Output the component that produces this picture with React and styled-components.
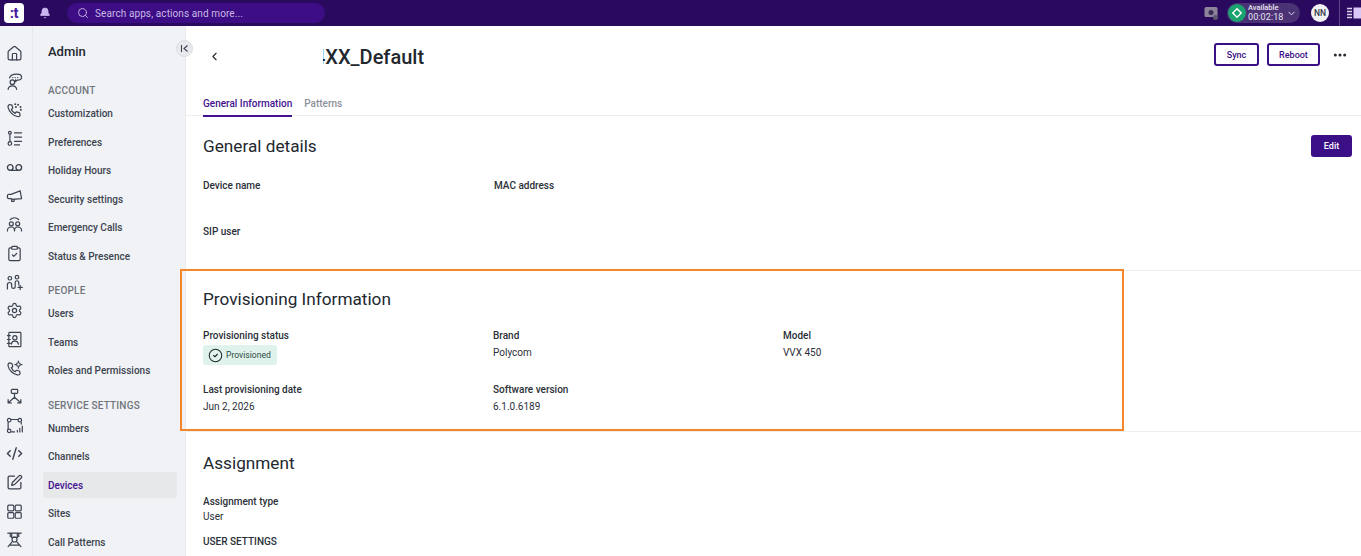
import React from "react";
import styled, { createGlobalStyle } from "styled-components";
import { Bell, Search, ChevronDown, ChevronLeft, MoreHorizontal, Home, Voicemail, ClipboardCheck, Settings, Code2, SquarePen, CircleCheck } from "lucide-react";

const Global = createGlobalStyle`
  html, body { margin: 0; padding: 0; height: 100%; overflow: hidden; background: #fff; }
  body { font-family: Roboto, "Liberation Sans", sans-serif; color: #23282f; }
  * { box-sizing: border-box; }
`;
const Page = styled.div`
  position: relative; width: 1361px; height: 556px; overflow: hidden;
  display: flex; flex-direction: column;
`;
const TopBar = styled.header`
  height: 26px; flex: none; background: #2a0a5e; display: flex; align-items: center; padding-left: 4px; color: #fff;
`;
const Logo = styled.div`
  width: 20px; height: 20px; border-radius: 4px; background: #fff; color: #4a1a9e; font-size: 15px; font-weight: 700;
  display: flex; align-items: center; justify-content: center; letter-spacing: -0.5px; line-height: 1;
`;
const BellWrap = styled.div`
  margin-left: 15px; width: 12px; display: flex; color: #c9b6ee;
`;
const SearchBox = styled.div`
  margin-left: 16px; width: 258px; height: 20px; border-radius: 10px; background: #3c0d85; color: #c9b8e6;
  display: flex; align-items: center; gap: 6px; padding-left: 10px; font-size: 10px; letter-spacing: 0.1px;
`;
const TopRight = styled.div`
  margin-left: auto; display: flex; align-items: center; height: 26px;
`;
const Monitor = styled.div`
  width: 15px; height: 15px; margin-right: 8px; display: flex; flex: none;
`;
const StatusPill = styled.div`
  width: 73px; flex: none; height: 20px; border-radius: 10px; background: #4a3275; display: flex; align-items: center; padding-left: 1px;
`;
const StatusDot = styled.div`
  width: 18px; height: 18px; flex: none; border-radius: 50%; background: #1aa36f; display: flex; align-items: center; justify-content: center;
`;
const StatusText = styled.div`
  margin-left: 2px; width: 33px; flex: none; display: flex; flex-direction: column; font-size: 7.5px; font-weight: 500; line-height: 8px; color: #e8e2f2;
  span:last-child { font-size: 9px; line-height: 10px; font-weight: 400; letter-spacing: 0.1px; }
`;
const Caret = styled.div`
  margin-left: 5px; display: flex; flex: none; color: #e8e2f2;
`;
const Avatar = styled.div`
  margin-left: 11px; width: 18px; height: 18px; flex: none; border-radius: 50%; background: #f2f2f4; color: #343a46; font-size: 8.5px; font-weight: 500;
  display: flex; align-items: center; justify-content: center;
`;
const TopSep = styled.div`
  width: 1px; height: 26px; flex: none; background: #5b4488; margin-left: 10px;
`;
const PanelIcon = styled.div`
  width: 14px; flex: none; margin-left: 7px; display: flex;
`;
const Body = styled.div`
  flex: 1; display: flex; min-height: 0;
`;
const Rail = styled.nav`
  width: 33px; flex: none; background: #f0f2f5; border-right: 1px solid #e6e8ec; padding: 18.5px 4px 0 0; display: flex; flex-direction: column; align-items: center; gap: 11.65px;
  color: #3c4350;
  svg { display: block; flex: none; width: 17px; height: 17px; }
`;
const Side = styled.aside`
  position: relative; width: 153px; flex: none; background: #f0f2f5; border-right: 1px solid #e9ebee; padding: 17px 8px 0 10px;
`;
const SideTitle = styled.div`
  font-size: 13px; font-weight: 500; line-height: 17px; padding-left: 5px; color: #23282f; margin-bottom: 25px;
`;
const Group = styled.div`
  font-size: 10px; font-weight: 500; color: #70757d; padding-left: 5px; line-height: 12px; letter-spacing: 0.2px; margin-top: ${p => p.$top || 0}px; margin-bottom: 3.5px;
`;
const Item = styled.div`
  height: 26px; margin-bottom: 2.55px; border-radius: 3px; padding-left: 5px; display: flex; align-items: center; font-size: 10px; font-weight: 500;
  color: ${p => (p.$on ? "#43128f" : "#3d4450")}; background: ${p => (p.$on ? "#e7e8ea" : "transparent")};
`;
const Collapse = styled.button`
  position: absolute; top: 14px; right: -8px; width: 17px; height: 17px; border-radius: 50%; border: 1px solid #dcdde0; background: #e8e9ec; padding: 0;
  display: flex; align-items: center; justify-content: center; color: #3c4350;
`;
const Main = styled.main`
  flex: 1; min-width: 0; display: flex; flex-direction: column;
`;
const Header = styled.div`
  height: 64px; flex: none; display: flex; align-items: flex-start; padding: 17px 9px 0 22px;
`;
const Back = styled.div`
  width: 13px; height: 14px; margin-top: 7px; display: flex; color: #23282f;
`;
const Title = styled.h1`
  position: relative; margin: 0 0 0 93px; white-space: nowrap;
  font-size: 20px; line-height: 28px; font-weight: 500; color: #23282f;
  &::before { content: ""; position: absolute; left: -1px; top: 0; width: 10px; height: 28px; background: #fff; }
`;
const Actions = styled.div`
  margin-left: auto; display: flex; align-items: center; gap: 8px;
`;
const Outline = styled.button`
  height: 23px; width: ${p => p.$w}px; border: 2px solid #3b0f85; border-radius: 3px; background: #fff; color: #3b0f85;
  font: 500 9px Roboto, sans-serif; padding: 0;
`;
const Dots = styled.div`
  margin-left: 4px; width: 20px; display: flex; color: #23282f;
`;
const Tabs = styled.div`
  height: 26px; flex: none; display: flex; gap: 12px; padding-left: 17px; border-bottom: 1px solid #eceef0;
`;
const Tab = styled.div`
  height: 27px; font-size: 10px; font-weight: 500; padding-top: 8px; line-height: 12px;
  color: ${p => (p.$on ? "#43128f" : "#8d9199")};
  border-bottom: ${p => (p.$on ? "2px solid #43128f" : "none")};
`;
const Section = styled.section`
  height: ${p => p.$h}px; flex: none; padding: ${p => p.$pt}px 9px 0 17px; border-bottom: ${p => (p.$last ? "none" : "1px solid #eceef0")};
`;
const SectionHead = styled.div`
  display: flex; align-items: center; justify-content: space-between; height: 22px; margin-bottom: ${p => p.$mb}px;
`;
const Heading = styled.h2`
  margin: 0; font-size: 17.2px; line-height: 22px; font-weight: 400; color: #23282f;
`;
const Edit = styled.button`
  width: 41px; height: 22px; border: 0; border-radius: 3px; background: #3b0f85; color: #fff; font: 500 9px Roboto, sans-serif; padding: 0;
`;
const Fields = styled.div`
  display: grid; grid-template-columns: repeat(3, 290px); row-gap: ${p => p.$gap}px;
`;
const Field = styled.div`
  display: flex; flex-direction: column; height: ${p => p.$h || 32}px; padding-left: ${p => p.$shift || 0}px;
`;
const Label = styled.div`
  font-size: 10px; font-weight: 500; line-height: 12px; color: #2b3038;
`;
const Value = styled.div`
  font-size: 10px; line-height: 12px; margin-top: ${p => p.$top || 5}px; color: #2b3038;
`;
const Badge = styled.div`
  margin-top: 3px; width: 74px; height: 20px; border-radius: 3px; background: #dff3ec; display: flex; align-items: center; gap: 3px; padding-left: 5px;
  font-size: 8.6px; color: #2f4a44;
`;
const Caps = styled.div`
  font-size: 10px; font-weight: 500; line-height: 12px; margin-top: 13px; color: #2b3038;
`;
const Highlight = styled.div`
  position: absolute; left: 180px; top: 269px; width: 944px; height: 162px; border: 2px solid #f5872a; pointer-events: none;
`;

const S = { fill: "none", stroke: "currentColor", strokeWidth: 1.7, strokeLinecap: "round", strokeLinejoin: "round", viewBox: "0 0 24 24" };
const railIcons = [
  <Home key="a" strokeWidth={1.7} />,
  <svg key="b" {...S}><circle cx="9" cy="13" r="3.200" /><path d="M3 23c.5-3.500 3-4.800 6-4.800s5.500 1.300 6 4.800" /><path d="M5 7c1-4 5-5.500 10-5.500 4 0 7 1 7 4 0 3.500-3.500 4.500-6 4.500l-2.500 2v-2.500" /><path d="M9.500 6.500h.01M13 6.500h.01M16.500 6.500h.01" strokeWidth="2" /></svg>,
  <svg key="c" {...S}><path d="M5 3.500l3.500 1 1 4.500-2 1.500c1 2.500 3 4.500 5.500 5.500l1.500-2 4.500 1 1 3.500c-.5 2-2 2.500-4 2C10 19.500 4.500 14 3 8c-.5-2 0-3.500 2-4.500z" /><path d="M13 3h.01M17 4h.01M20.500 7h.01M21 11h.01M14 7h.01" strokeWidth="2.800" /></svg>,
  <svg key="d" {...S}><circle cx="5.500" cy="4" r="2" /><circle cx="5.500" cy="19" r="2.500" /><path d="M5.500 6v10.500M12 4h10M12 10h10M12 16h10M12 21h7" /></svg>,
  <Voicemail key="e" strokeWidth={1.9} />,
  <svg key="f" {...S}><path d="M7 9l13-5 2 11-13 1-2-1H4a2 2 0 0 1-2-2v-2a2 2 0 0 1 2-2z" /><path d="M8 16v3h3l1-3" /></svg>,
  <svg key="g" {...S}><circle cx="7.500" cy="11" r="2.800" /><circle cx="16.500" cy="11" r="2.800" /><path d="M2 21c0-3.500 2.500-5.500 5.500-5.500S12 17 12 21c0-4 1.500-5.500 4.500-5.500S22 17.500 22 21M6 5c3.500-3 8.500-3 12 0" /></svg>,
  <ClipboardCheck key="h" strokeWidth={1.7} />,
  <svg key="i" {...S}><circle cx="5.500" cy="6" r="2.500" /><circle cx="15.500" cy="4.500" r="2.500" /><path d="M2 21v-6c0-2 1.500-3 3-3s3 1.500 3 3v3c0 3 5 3 5 0v-6c0-1.500 1-2.500 2.500-2.500s2.500 1 2.500 3v3M17 19h6M20 16v6" /></svg>,
  <Settings key="j" strokeWidth={1.7} />,
  <svg key="k" {...S}><rect x="4" y="2" width="17" height="20" rx="1" /><circle cx="12.500" cy="9.500" r="3" /><path d="M7.500 18.500c.5-3 2.500-4.200 5-4.200s4.500 1.200 5 4.200M2 6.500h4M2 12h4M2 17.500h4" /></svg>,
  <svg key="l" {...S}><path d="M5 4l3.500 1 1 4.500-2 1.500c1 2.500 3 4.500 5.500 5.500l1.500-2 4.500 1 1 3.500c-.5 2-2 2.500-4 2C10 20 4 14.500 3 8.500 2.500 6.500 3 5 5 4z" /><circle cx="17.500" cy="6.500" r="2.600" /><path d="M17.500 1.500v1.200M17.500 10.300v1.200M12.500 6.500h1.200M21.300 6.500h1.200" /></svg>,
  <svg key="m" {...S}><rect x="7.500" y="2" width="9" height="5.500" rx="1" /><path d="M12 7.500V13M12 13l-9 8M12 13l9 8M3 16.500V21h4.500M21 16.500V21h-4.500" /></svg>,
  <svg key="n" {...S}><circle cx="4.500" cy="4.500" r="2.500" /><circle cx="19.500" cy="4.500" r="2.500" /><circle cx="4.500" cy="19.500" r="2.500" /><path d="M7 3.500h10M21.500 7.500V10M3 7.500V17M8 21h4M16 21v-2M19.500 21v-5M23 21v-8" /></svg>,
  <Code2 key="o" strokeWidth={2} />,
  <SquarePen key="p" strokeWidth={1.8} />,
  <svg key="q" {...S}><rect x="2.500" y="3" width="8.500" height="8" rx="1.500" /><rect x="13" y="3" width="8.500" height="8" rx="1.500" /><rect x="2.500" y="13.500" width="8.500" height="8" rx="1.500" /><rect x="13" y="13.500" width="8.500" height="8" rx="1.500" /></svg>,
  <svg key="r" {...S}><path d="M2.500 3h19M6 3v5M18 3v5M8 3v6h8V3" /><circle cx="12" cy="12" r="3.500" /><path d="M9 15l-6 7M15 15l6 7M5 20h14" /></svg>,
];

const account = ["Customization", "Preferences", "Holiday Hours", "Security settings", "Emergency Calls", "Status & Presence"];
const people = ["Users", "Teams", "Roles and Permissions"];
const service = ["Numbers", "Channels", "Devices", "Sites", "Call Patterns"];

export default function App() {
  return (
    <Page>
      <Global />
      <TopBar>
        <Logo>:t</Logo>
        <BellWrap><Bell size={12} fill="currentColor" strokeWidth={1.5} /></BellWrap>
        <SearchBox><Search size={12} strokeWidth={1.8} />Search apps, actions and more...</SearchBox>
        <TopRight>
          <Monitor>
            <svg width="15" height="15" viewBox="0 0 15 15"><rect x="0.500" y="1" width="13" height="10" rx="1.500" fill="#8c8499" /><circle cx="7" cy="6.500" r="2.500" fill="#3a2a55" /><circle cx="11.500" cy="11.500" r="2.500" fill="#5e5670" /></svg>
          </Monitor>
          <StatusPill>
            <StatusDot>
              <svg width="10" height="10" viewBox="0 0 10 10"><path d="M5 .8L9.200 5 5 9.200.8 5z" fill="none" stroke="#fff" strokeWidth="1.400" /></svg>
            </StatusDot>
            <StatusText><span>Available</span><span>00:02:18</span></StatusText>
            <Caret><ChevronDown size={11} strokeWidth={2} /></Caret>
          </StatusPill>
          <Avatar>NN</Avatar>
          <TopSep />
          <PanelIcon>
            <svg width="14" height="12" viewBox="0 0 14 12"><path d="M0 1.500h5M0 4.500h5M0 7.500h5M0 10.500h5" stroke="#d9d0ea" strokeWidth="1.300" /><rect x="6.500" y="0.500" width="7.500" height="11" fill="#d9c8f5" /></svg>
          </PanelIcon>
        </TopRight>
      </TopBar>
      <Body>
        <Rail>{railIcons}</Rail>
        <Side>
          <SideTitle>Admin</SideTitle>
          <Group>ACCOUNT</Group>
          {account.map(t => <Item key={t}>{t}</Item>)}
          <Group $top={16}>PEOPLE</Group>
          {people.map(t => <Item key={t}>{t}</Item>)}
          <Group $top={16}>SERVICE SETTINGS</Group>
          {service.map(t => <Item key={t} $on={t === "Devices"}>{t}</Item>)}
          <Collapse aria-label="Collapse">
            <svg width="9" height="9" viewBox="0 0 9 9" fill="none" stroke="currentColor" strokeWidth="1.100"><path d="M1.500 1v7M7.500 1.500L4 4.500l3.500 3" /></svg>
          </Collapse>
        </Side>
        <Main>
          <Header>
            <Back><ChevronLeft size={13} strokeWidth={2} /></Back>
            <Title>4XX_Default</Title>
            <Actions>
              <Outline $w={45}>Sync</Outline>
              <Outline $w={53}>Reboot</Outline>
              <Dots><MoreHorizontal size={16} strokeWidth={2.500} /></Dots>
            </Actions>
          </Header>
          <Tabs>
            <Tab $on>General Information</Tab>
            <Tab>Patterns</Tab>
          </Tabs>
          <Section $h={155} $pt={19}>
            <SectionHead $mb={23}>
              <Heading>General details</Heading>
              <Edit>Edit</Edit>
            </SectionHead>
            <Fields $gap={14}>
              <Field><Label>Device name</Label></Field>
              <Field $shift={1}><Label>MAC address</Label></Field>
              <span />
              <Field><Label>SIP user</Label></Field>
            </Fields>
          </Section>
          <Section $h={161} $pt={17}>
            <SectionHead $mb={20}><Heading>Provisioning Information</Heading></SectionHead>
            <Fields $gap={0}>
              <Field $h={54}>
                <Label>Provisioning status</Label>
                <Badge><CircleCheck size={15} strokeWidth={1.700} color="#23282f" />Provisioned</Badge>
              </Field>
              <Field $h={54}><Label>Brand</Label><Value>Polycom</Value></Field>
              <Field $h={54}><Label>Model</Label><Value>VVX 450</Value></Field>
              <Field><Label>Last provisioning date</Label><Value>Jun 2, 2026</Value></Field>
              <Field><Label>Software version</Label><Value>6.1.0.6189</Value></Field>
            </Fields>
          </Section>
          <Section $h={120} $pt={20} $last>
            <SectionHead $mb={22}><Heading>Assignment</Heading></SectionHead>
            <Label>Assignment type</Label>
            <Value $top={3}>User</Value>
            <Caps>USER SETTINGS</Caps>
          </Section>
        </Main>
      </Body>
      <Highlight />
    </Page>
  );
}
